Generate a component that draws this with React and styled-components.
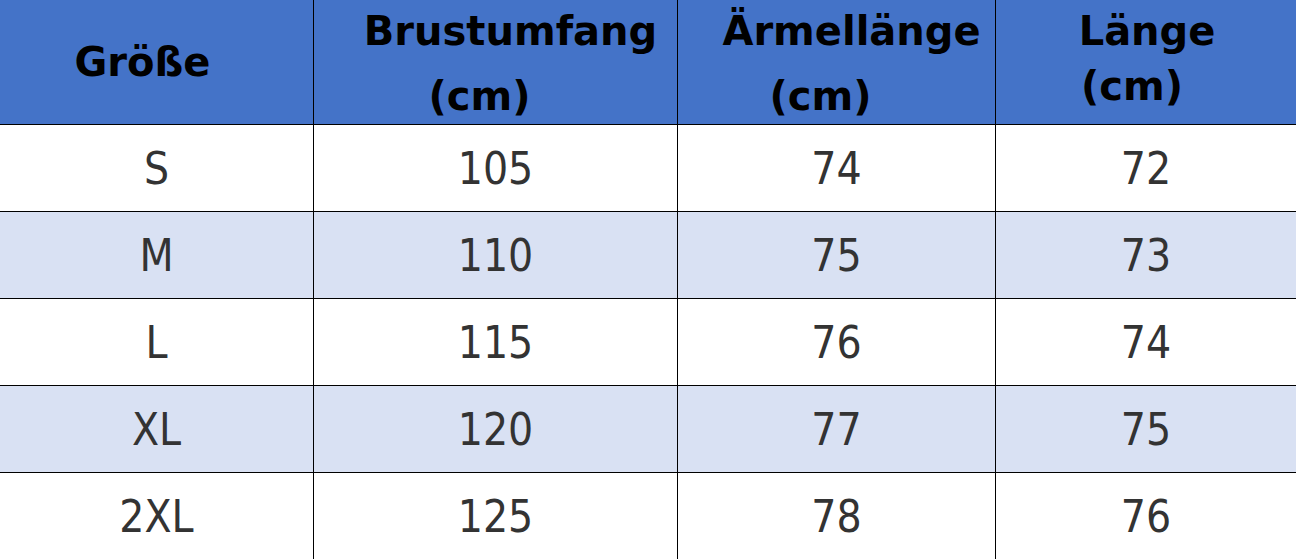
import React from 'react';
import styled, { createGlobalStyle } from 'styled-components';

const GlobalStyle = createGlobalStyle`
  html, body {
    margin: 0;
    padding: 0;
    background: #ffffff;
  }
`;

const Table = styled.div`
  display: grid;
  grid-template-columns: 313px 363px 317px 300px;
  grid-template-rows: 124px repeat(5, 86px);
  gap: 1px;
  width: 1296px;
  height: 559px;
  background-color: #000000;
  overflow: hidden;
`;

const Row = styled.div`
  display: contents;
`;

const HeadCell = styled.div`
  display: flex;
  flex-direction: column;
  align-items: center;
  justify-content: center;
  padding-top: ${(p) => p.$drop || 0}px;
  padding-bottom: ${(p) => p.$lift || 0}px;
  background-color: #4473c8;
  color: #000000;
  font-family: "DejaVu Sans", Verdana, sans-serif;
  font-weight: 700;
  font-size: 40px;
  line-height: ${(p) => p.$lh || 1.6};
  text-align: center;
`;

const HeadLine = styled.div`
  padding-left: ${(p) => (p.$shift > 0 ? p.$shift * 2 : 0)}px;
  padding-right: ${(p) => (p.$shift < 0 ? -p.$shift * 2 : 0)}px;
  white-space: nowrap;
`;

const Cell = styled.div`
  display: flex;
  align-items: center;
  justify-content: center;
  background-color: ${(p) => (p.$striped ? '#d9e1f3' : '#ffffff')};
  color: #333333;
  font-family: "DejaVu Sans Condensed", "DejaVu Sans", Tahoma, sans-serif;
  font-stretch: condensed;
  font-size: 44px;
`;

const headers = [
  { lines: [['Größe', -14]] },
  { lines: [['Brustumfang', 15], ['(cm)', -16]], lh: 1.62, drop: 4 },
  { lines: [['Ärmellänge', 15], ['(cm)', -16]], lh: 1.62, drop: 4 },
  { lines: [['Länge', 1], ['(cm)', -14]], lh: 1.38, lift: 6 },
];

const rows = [
  ['S', '105', '74', '72'],
  ['M', '110', '75', '73'],
  ['L', '115', '76', '74'],
  ['XL', '120', '77', '75'],
  ['2XL', '125', '78', '76'],
];

function App() {
  return (
    <>
      <GlobalStyle />
      <Table>
        <Row>
          {headers.map((h) => (
            <HeadCell key={h.lines[0][0]} $lh={h.lh} $drop={h.drop} $lift={h.lift}>
              {h.lines.map(([text, shift], i) => (
                <HeadLine key={i} $shift={shift}>
                  {text}
                </HeadLine>
              ))}
            </HeadCell>
          ))}
        </Row>
        {rows.map((row, r) => (
          <Row key={row[0]}>
            {row.map((value, c) => (
              <Cell key={c} $striped={r % 2 === 1}>
                {value}
              </Cell>
            ))}
          </Row>
        ))}
      </Table>
    </>
  );
}

export default App;
